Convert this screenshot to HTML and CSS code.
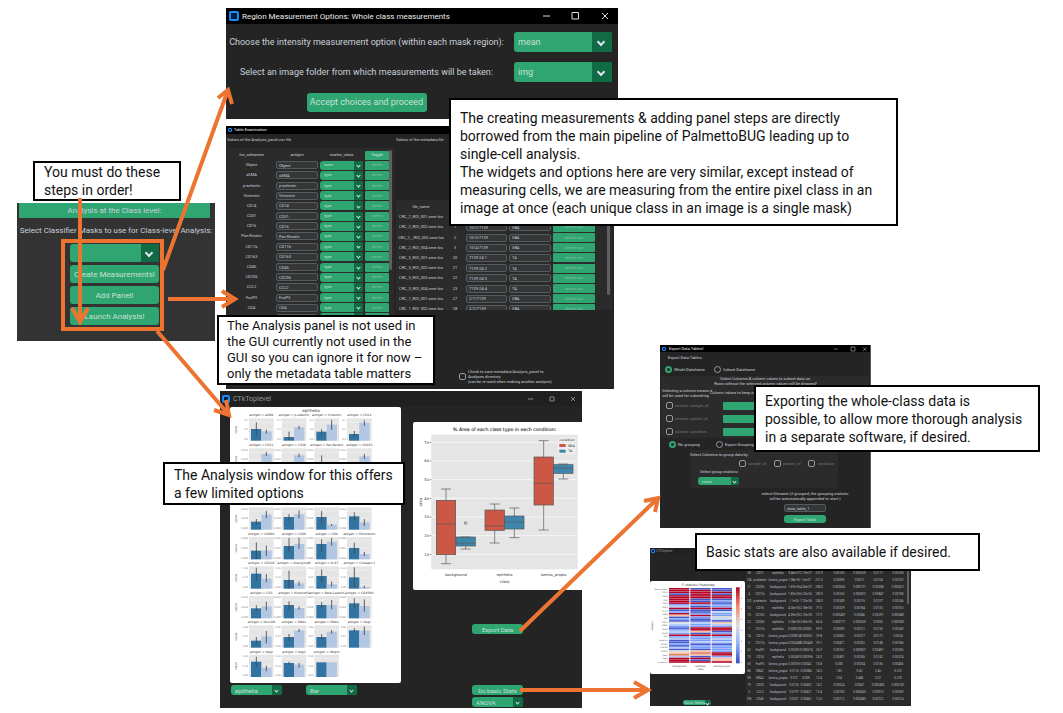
FILE: index.html
```html
<!DOCTYPE html>
<html lang="en">
<head>
<meta charset="utf-8">
<title>Class-level analysis workflow</title>
<link rel="stylesheet" href="styles.css">
</head>
<body>
<main class="board">

  <section class="panel launcher">
    <h2 class="launcher-title">Analysis at the Class level:</h2>
    <label class="launcher-label" for="mask">Select Classifier Masks to use for Class-level Analysis:</label>
    <div class="launcher-actions">
      <span class="combo"><select id="mask"><option></option></select></span>
      <button>Create Measurements!</button>
      <button>Add Panel!</button>
      <button>Launch Analysis!</button>
    </div>
  </section>

  <section class="panel region">
    <header class="titlebar"><i class="logo"></i><span>Region Measurement Options: Whole class measurements</span>
      <svg class="controls" viewBox="0 0 78 12"><path d="M6 6h7M35 2.500h6.500v6.500h-6.500zM65 3l6 6M71 3l-6 6"/></svg></header>
    <div class="region-body">
      <label for="stat">Choose the intensity measurement option (within each mask region):</label>
      <span class="combo"><select id="stat"><option>mean</option></select></span>
      <label for="folder">Select an image folder from which measurements will be taken:</label>
      <span class="combo"><select id="folder"><option>img</option></select></span>
      <button>Accept choices and proceed</button>
    </div>
  </section>

  <section class="panel tables">
    <header class="titlebar"><i class="logo"></i><span>Table Examination</span></header>
    <div class="tables-body">
      <div class="tables-left">
        <p>Values of the Analysis_panel.csv file</p>
        <div class="scroll"><div class="antigens" id="antigens"></div><i class="thumb"></i></div>
      </div>
      <div class="tables-right">
        <p>Values of the metadata file</p>
        <div class="scroll meta-scroll"><div class="metadata" id="metadata"></div><i class="thumb"></i></div>
        <label class="save"><input type="checkbox"><span>Check to save metadata/Analysis_panel to<br>Analyses directory<br>(can be re-used when making another analysis)</span></label>
      </div>
    </div>
  </section>

  <section class="panel analysis">
    <header class="titlebar"><i class="logo"></i><span>CTkToplevel</span>
      <svg class="controls" viewBox="0 0 78 12"><path d="M24 6h5M46 4h4v4h-4zM67 4l4 4M71 4l-4 4"/></svg></header>
    <div class="analysis-body">
      <div class="analysis-left">
        <svg class="figure facets" id="facets" viewBox="45 66 513 828"></svg>
        <div class="combo-row">
          <span class="combo"><select aria-label="Class"><option>epithelia</option></select></span>
          <span class="combo"><select aria-label="Plot type"><option>Bar</option></select></span>
        </div>
      </div>
      <div class="analysis-right">
        <svg class="figure boxes" id="boxes" viewBox="24 112 507 504"></svg>
        <div class="analysis-actions">
          <button>Export Data</button>
          <button class="stats-button">Do basic Stats</button>
          <span class="combo"><select aria-label="Test"><option>ANOVA</option></select></span>
        </div>
      </div>
    </div>
  </section>

  <section class="panel export">
    <header class="titlebar"><i class="logo"></i><span>Export Data Tables!</span>
      <svg class="controls" viewBox="0 0 78 12"><path d="M10 6h7M44 2h8v8h-8zM68 3l7 7M75 3l-7 7"/></svg></header>
    <div class="export-body">
      <p class="export-heading">Export Data Tables:</p>
      <div class="radios"><label><input type="radio" name="frame" checked>Whole Dataframe</label><label><input type="radio" name="frame">Subset Dataframe</label></div>
      <div class="subset">
        <p class="subset-note">Select Columns &amp; column values to subset data on.<br>Rows without the selected column values will be dropped!</p>
        <p>Selecting a column means it<br>will be used for subsetting</p><p class="keep">Column values to keep can</p>
        <label><input type="checkbox">column: sample_id</label><button aria-label="sample_id values"></button>
        <label><input type="checkbox">column: patient_id</label><button aria-label="patient_id values"></button>
        <label><input type="checkbox">column: condition</label><button aria-label="condition values"></button>
      </div>
      <div class="radios grouping"><label><input type="radio" name="group" checked>No grouping</label><label><input type="radio" name="group">Export Grouping</label></div>
      <div class="group">
        <p>Select Columns to group data by:</p>
        <div class="group-checks"><label><input type="checkbox">sample_id</label><label><input type="checkbox">patient_id</label><label><input type="checkbox">condition</label></div>
        <label class="group-stat" for="gstat">Select group statistic:</label>
        <span class="combo"><select id="gstat"><option>mean</option></select></span>
      </div>
      <div class="save-form">
        <label for="fname">select filename (if grouped, the grouping statistic<br>will be automatically appended to start:)</label>
        <input id="fname" value="data_table_1">
        <button>Export Table</button>
      </div>
    </div>
  </section>

  <section class="panel stats">
    <header class="titlebar"><i class="logo"></i><span>CTkToplevel</span></header>
    <div class="stats-body">
      <div class="stats-left">
        <svg class="figure heat" id="heat" viewBox="30 153 285 279"></svg>
        <span class="combo"><select aria-label="Heatmap type"><option>Stat vs. Heatmap</option></select></span>
      </div>
      <div class="stats-right"><table id="stats"></table><i class="thumb"></i></div>
    </div>
  </section>

  <p class="note note-order">You must do these<br>steps in order!</p>
  <p class="note note-borrowed">The creating measurements &amp; adding panel steps are directly<br>borrowed from the main pipeline of PalmettoBUG leading up to<br>single-cell analysis.<br>The widgets and options here are very similar, except instead of<br>measuring cells, we are measuring from the entire pixel class in an<br>image at once (each unique class in an image is a single mask)</p>
  <p class="note note-panel">The Analysis panel is not used in<br>the GUI currently not used in the<br>GUI so you can ignore it for now –<br>only the metadata table matters</p>
  <p class="note note-window">The Analysis window for this offers<br>a few limited options</p>
  <p class="note note-export">Exporting the whole-class data is<br>possible, to allow more thorough analysis<br>in a separate software, if desired.</p>
  <p class="note note-stats">Basic stats are also available if desired.</p>

  <svg class="arrows" width="1063" height="713" viewBox="0 0 1063 713">
    <rect x="63" y="241" width="99" height="88"/>
    <path d="M80 198V321M72 308l8 14 8-14"/>
    <path d="M163 270L228 90M218 98l10-8 4 14"/>
    <path d="M168 299H234M222 291l13 8-13 8"/>
    <path d="M157 331L229 415M214 410l15 5-3-15"/>
    <path d="M520 631L658 498M644 501l14-3-3 14"/>
    <path d="M520 690H647M634 682l14 8-14 8"/>
  </svg>
</main>
<script src="app.js"></script>
</body>
</html>
```
FILE: styles.css
```css
* { box-sizing: border-box; }
body { margin: 0; background: #fff; font-family: Roboto, "Liberation Sans", sans-serif; }
p, h2 { margin: 0; font-weight: 400; }
button, input, select { font: inherit; color: inherit; margin: 0; padding: 0; border: 0; min-width: 0; }
.board { position: relative; min-height: 713px; overflow: hidden; }

/* windows on the board */
.panel { position: absolute; overflow: hidden; background: #242424; color: #c9d0d8; display: flex; flex-direction: column; }
.titlebar { display: flex; align-items: center; flex: none; background: #000; color: #eee; }
.logo { flex: none; width: 10px; height: 10px; border: 2px solid #1a8cf5; border-radius: 2px; background: #001c40; }
.controls { margin-left: auto; width: 78px; height: 12px; fill: none; stroke: #ddd; stroke-width: 1; }
button { background: #2fa572; border-radius: 3px; color: #c9e0d8; white-space: nowrap; overflow: hidden; }
.combo { position: relative; display: flex; min-width: 0; color: #c9e0d8; }
.combo select { appearance: none; width: 100%; background: #2fa572; border-radius: 3px; padding-left: 4px; opacity: 1; }
.combo::before { content: ""; position: absolute; right: 0; top: 0; bottom: 0; width: 20%; background: #106a43; border-radius: 0 3px 3px 0; }
.combo::after { content: ""; position: absolute; right: 8%; top: 35%; width: 3px; height: 3px; border: solid #dce4ee; border-width: 0 1px 1px 0; transform: rotate(45deg); }
.figure { display: block; background: #fff; border-radius: 2px; font-family: "DejaVu Sans", sans-serif; }
.thumb { background: #606060; border-radius: 2px; width: 3px; flex: none; }
input[type="checkbox"], input[type="radio"] { appearance: none; flex: none; width: 7px; height: 7px; border: 1px solid #949a9f; border-radius: 2px; }
input[type="radio"] { border-radius: 50%; }
input[type="radio"]:checked { border: 2px solid #2fa572; }

.launcher { left: 17px; top: 203px; width: 198px; height: 138px; background: #333; font-size: 8px; text-align: center; }
.launcher-title { margin: 0 5px 0 2px; background: #2fa572; font-size: 8px; line-height: 15px; }
.launcher-label { line-height: 26px; white-space: nowrap; }
.launcher-actions { display: grid; grid-auto-rows: 18px; gap: 3px; width: 89px; margin-left: 53px; }
.launcher .combo::after, .region .combo::after { width: 4px; height: 4px; border-width: 0 2px 2px 0; }

.region { left: 226px; top: 8px; width: 392px; height: 111px; font-size: 9px; }
.region .titlebar { height: 16px; padding: 0 3px; gap: 3px; font-size: 8px; }
.region-body { display: grid; grid-template-columns: 1fr 98px; grid-auto-rows: 20px; row-gap: 10px; column-gap: 10px; padding: 8px 6px 0 3px; align-items: center; text-align: center; white-space: nowrap; }
.region-body .combo { height: 20px; }
.region-body button { width: 120px; height: 19px; justify-self: center; }

.tables { left: 226px; top: 126px; width: 388px; height: 263px; font-size: 4px; line-height: 6px; }
.tables .titlebar { height: 8px; padding: 0 2px; gap: 2px; }
.tables .logo, .export .logo, .stats .logo { width: 4px; height: 4px; border-width: 1px; border-radius: 1px; }
.tables-body { display: grid; grid-template-columns: 167px 1fr; padding: 3px 2px 0 1px; }
.tables p { height: 11px; font-size: 4px; white-space: nowrap; }
.tables-right { padding-left: 2px; }
.scroll { display: flex; align-items: flex-start; background: #2b2b2b; padding: 2px; }
.antigens { flex: 1; height: 173px; display: grid; grid-template-columns: 45px 42px 43px 1fr; grid-template-rows: repeat(17, 1fr); gap: 0 2px; align-items: center; text-align: center; overflow: hidden; }
.antigens input, .metadata input { width: 100%; height: 8px; background: #343638; border: 1px solid #565b5e; border-radius: 2px; padding-left: 2px; }
.antigens .combo, .antigens .combo select { height: 9px; }
.antigens button, .metadata button { height: 9px; border-radius: 1px; color: #86bda3; }
.antigens .head { color: #dce4ee; }
.antigens .combo::after, .analysis .combo::after, .export .combo::after, .stats .combo::after { width: 2px; height: 2px; }
.tables-left .thumb { height: 120px; }
.meta-scroll { height: 110px; overflow: hidden; }
.tables-right > p + .meta-scroll { margin-top: 52px; }
.metadata { flex: 1; height: 112px; display: grid; grid-template-columns: 46px 18px 41px 42px 42px; grid-template-rows: repeat(11, 1fr); gap: 0 2px; align-items: center; text-align: center; }
.meta-scroll .thumb { height: 93px; }
.save { display: flex; align-items: center; gap: 2px; margin: 59px 0 0 63px; line-height: 5px; white-space: nowrap; }

.analysis { left: 220px; top: 391px; width: 362px; height: 317px; font-size: 6px; }
.analysis .titlebar { height: 15px; padding-left: 2px; gap: 3px; background: #202020; color: #999; font-size: 7px; }
.analysis .logo { width: 8px; height: 8px; border-width: 2px; }
.analysis .controls { stroke: #888; width: 78px; }
.analysis-body { display: flex; gap: 12px; padding: 1px 0 0 10px; }
.facets { width: 171px; height: 276px; }
.combo-row { display: flex; gap: 24px; margin-top: 2px; padding-left: 1px; }
.combo-row .combo, .analysis-actions .combo { width: 51px; height: 10px; }
.analysis-right { padding-top: 15px; }
.boxes { width: 169px; height: 168px; border-radius: 2px 0 0 2px; }
.analysis-actions { display: flex; flex-direction: column; align-items: flex-start; margin: 34px 0 0 59px; }
.analysis-actions button { width: 51px; height: 10px; }
.analysis-actions .stats-button { margin: 51px 0 2px; }

.export { left: 660px; top: 345px; width: 211px; height: 183px; font-size: 4px; line-height: 5px; border-right: 1px solid #555; white-space: nowrap; }
.export .titlebar { height: 7px; padding: 0 2px; gap: 3px; }
.export .controls { width: 39px; height: 6px; margin-right: 0; }
.export-heading { padding: 3px 8px; }
.radios { display: flex; gap: 10px; height: 13px; padding-left: 5px; }
.radios label, .subset label, .group-checks label { display: flex; align-items: center; gap: 2px; }
.radios label { width: 39px; }
.subset { display: grid; grid-template-columns: 47px 1fr; grid-template-rows: 10px 13px repeat(3, 13px); background: #2b2b2b; margin: 0 1px; column-gap: 14px; padding-left: 1px; align-items: center; }
.subset p { text-align: center; }
.subset .keep { margin-left: -13px; text-align: left; }
.subset-note { grid-column: 1 / 3; }
.subset label, .group-checks label { color: #777; padding-left: 4px; }
.subset button { height: 8px; width: 60px; border-radius: 1px; }
.radios.grouping { height: 12px; padding-left: 9px; gap: 8px; }
.group { background: #2b2b2b; margin: 0 32px 0 30px; height: 38px; }
.group p { padding: 2px 0 3px; }
.group-checks { display: flex; justify-content: flex-end; gap: 4px; padding-right: 4px; }
.group-stat { display: block; padding: 2px 10px 3px; }
.group .combo { width: 41px; height: 8px; margin-left: 8px; }
.save-form { display: flex; flex-direction: column; align-items: center; gap: 3px; margin: 3px 20px 0 100px; text-align: center; }
.save-form input, .save-form button { width: 42px; height: 8px; }
.save-form input { background: #343638; border: 1px solid #565b5e; border-radius: 2px; padding-left: 2px; }

.stats { left: 650px; top: 548px; width: 261px; height: 158px; font-size: 3px; }
.stats .titlebar { height: 5px; padding-left: 1px; gap: 1px; background: #202020; color: #999; }
.stats-body { display: flex; }
.stats-left { padding-top: 28px; }
.heat { width: 95px; height: 93px; }
.stats-left .combo { width: 28px; height: 5px; margin: 26px 0 0 33px; }
.stats-left select { padding-left: 1px; }
.stats-right { flex: 1; display: flex; align-items: flex-start; background: #2b2b2b; margin: 16px 1px 0; padding-top: 1px; overflow: hidden; }
.stats-right .thumb { width: 2px; height: 34px; }
.stats table { width: 161px; border-collapse: collapse; table-layout: fixed; text-align: center; line-height: 7px; color: #b8bec5; }
.stats td { padding: 0; white-space: nowrap; }
.c-id { width: 6px; }
.c-name { width: 16px; }
.c-class { width: 20px; }
.c-num { width: 12px; }
.c-f { width: 14px; }
.c-p { width: 26px; }
.c-sd { width: 15px; }
.c-mean { width: 22px; }
.c-last { width: 18px; }

/* callouts */
.note { position: absolute; background: #fff; border: 2px solid #000; color: #111; font-size: 14px; line-height: 18px; white-space: nowrap; }
.note-order { left: 33px; top: 161px; width: 148px; padding: 0 9px; }
.note-borrowed { left: 449px; top: 98px; width: 449px; padding: 9px 9px 7px; }
.note-panel { left: 217px; top: 315px; width: 218px; padding: 1px 8px; font-size: 13px; line-height: 16px; }
.note-window { left: 163px; top: 462px; width: 242px; padding: 2px 9px 1px; }
.note-export { left: 754px; top: 385px; width: 286px; padding: 5px 9px 4px; }
.note-stats { left: 695px; top: 533px; width: 285px; padding: 8px 9px; }

.arrows { position: absolute; left: 0; top: 0; fill: none; stroke: #ed7331; stroke-width: 4; pointer-events: none; }
```
FILE: app.js
```js
const byId = id => document.getElementById(id);

/* antigen panel */
const antigens = ['Object', 'aSMA', 'p-selectin', 'Vimentin', 'CD14', 'CD31', 'CD16', 'Pan-Keratin', 'CD11b', 'CD163', 'CD45', 'CD206', 'CCL2', 'FoxP3', 'CD4', ''];
byId('antigens').innerHTML =
  '<span>fcs_colnames</span><span>antigen</span><span>marker_class</span><button class="head">Toggle</button>' +
  antigens.map((a, i) => `<span>${a}</span><input aria-label="antigen ${a}" value="${a}"><span class="combo"><select aria-label="marker class ${a}"><option>${i ? (a ? 'type' : '') : 'none'}</option></select></span><button>${a ? 'delete' : ''}</button>`).join('');

/* metadata */
const files = [['2_ROI_001', 0, '', ''], ['2_ROI_002', 1, '10/2/7139', 'SBA'], ['2__ROI_003', 2, '10/3/7139', 'SBA'], ['2_ROI_004', 3, '10/4/7139', 'SBA'],
  ['3_ROI_001', 20, '7139-24-1', 'TA'], ['3_ROI_002', 21, '7139-24-2', 'TA'], ['3_ROI_003', 22, '7139-24-3', 'TA'], ['3_ROI_004', 23, '7139-24-4', 'TA'],
  ['1_ROI_001', 27, '2/1/7139', 'SBA'], ['1_ROI_002', 28, '2/2/7139', 'SBA']];
byId('metadata').innerHTML = '<span>file_name</span><span>s</span><span></span><span></span><span></span>' +
  files.map(f => `<span>CRC_${f[0]}.ome.fcs</span><span>${f[1] || ''}</span><input aria-label="patient" value="${f[2]}"><input aria-label="condition" value="${f[3]}"><button>${f[2] ? 'delete row' : ''}</button>`).join('');

const text = (x, y, s, size, extra = '') => `<text x="${x}" y="${y}" font-size="${size}" text-anchor="middle" fill="#333" ${extra}>${s}</text>`;
const rect = (x, y, w, h, fill, extra = '') => `<rect x="${x}" y="${y}" width="${w}" height="${h}" fill="${fill}" ${extra}/>`;

/* facet bars: [name, bar1 top, low, high, bar2 top, low, high], offsets down from the facet top */
const facetRows = [
  [100, ['0.4', '0.2', '0.0'], ['aSMA', 32, 12, 50, 39, 34, 46], ['p-selectin', 56, 40, 65, 27, 23, 33], ['Vimentin', 40, 32, 50, 19, 5, 35], ['CD14', 47, 38, 55, 13, 6, 23]],
  [190, ['0.015', '0.010'], ['CD31', 50, 42, 60, 17, 11, 23], ['CD16', 50, 42, 60, 21, 16, 27], ['Pan-Keratin', 48, 21, 60, 50, 45, 60], ['CD163', 50, 44, 60, 24, 17, 32]],
  [367, ['0.015', '0.010', '0.000'], ['', 43, 35, 53, 22, 11, 33], ['', 29, 20, 41, 21, 9, 33], ['', 29, 11, 48, 52, 50, 56], ['', 27, 15, 39, 45, 35, 56]],
  [456, ['0.006', '0.004', '0.000'], ['CD66b', 41, 16, 66, 41, 26, 57], ['CD20', 27, 3, 44, 21, 2, 35], ['CD8', 21, 7, 42, 14, 3, 26], ['Fibronectin', 33, 17, 49, 51, 45, 57]],
  [544, ['0.15', '0.10', '0.00'], ['CD326', 22, 4, 44, 37, 23, 48], ['GranzymeB', 41, 13, 66, 51, 45, 59], ['Ki-67', 29, 9, 47, 54, 46, 61], ['Collagen-1', 33, 3, 63, 62, 58, 65]],
  [633, ['0.020', '0.010', '0.000'], ['CD3', 37, 28, 45, 31, 17, 43], ['HistoneH3', 27, 16, 41, 36, 31, 41], ['Beta-Catenin', 27, 18, 36, 27, 12, 40], ['CD45RO', 22, 7, 38, 30, 10, 47]],
  [721, ['0.06', '0.04', '0.00'], ['HLA-DR', 46, 35, 58, 33, 17, 54], ['DNA1', 35, 26, 46, 15, 11, 20], ['DNA2', 35, 27, 45, 19, 14, 25], ['Seg1', 15, 9, 21, 16, 4, 29]],
  [809, ['0.20', '0.10', '0.00'], ['Seg2', 21, 6, 36, 39, 33, 50], ['Seg3', 25, 21, 29, 30, 25, 39], ['Object', 23, 23, 23, 23, 23, 23]]];
let facets = text(288, 82, 'epithelia', 12);
facetRows.forEach(([y, ticks, ...cells]) => {
  facets += text(0, 0, 'value', 9, `transform="translate(66 ${y + 34}) rotate(-90)"`);
  cells.forEach((c, i) => {
    const x = [102, 200, 298, 396][i];
    facets += rect(x, y, 74, 67, '#e5e5e5');
    [12, 34, 56].forEach(d => { facets += `<path d="M${x} ${y + d}h74" stroke="#fff"/>`; });
    facets += rect(x + 6, y + c[1], 31, 67 - c[1], '#3274a1') + rect(x + 37, y + c[4], 31, 67 - c[4], '#b3c7e3');
    facets += `<path d="M${x + 22} ${y + c[2]}V${y + c[3]}M${x + 52} ${y + c[5]}V${y + c[6]}" stroke="#444" stroke-width="2.500"/>`;
    if (c[0]) facets += text(x + 37, y - 6, 'antigen = ' + c[0], 9);
    ticks.forEach((t, k) => { facets += `<text x="${x - 3}" y="${y + 7 + k * 29}" font-size="7" text-anchor="end" fill="#777">${t}</text>`; });
  });
});
byId('facets').innerHTML = facets;

/* box plot: [x, upper whisker, box top, median, box bottom, lower whisker, colour] */
let boxes = text(299, 140, '% Area of each class type in each condition:', 14, 'stroke="#333" stroke-width="0.4"') + rect(79, 150, 439, 404, '#e5e5e5');
[70, 60, 50, 40, 30, 20, 10].forEach((v, i) => {
  const y = 173 + i * 56;
  boxes += `<path d="M79 ${y}H518" stroke="#fff" stroke-width="2"/>` + text(65, y + 4, v, 11) + `<path d="M74 ${y}h5" stroke="#555" stroke-width="2"/>`;
});
[[94, 313, 347, 418, 510, 537, 'r'], [153, 457, 457, 475, 484, 493, 'b'], [240, 358, 376, 424, 437, 475, 'r'], [299, 370, 394, 412, 433, 459, 'b'], [387, 168, 217, 296, 361, 436, 'r'], [446, 238, 240, 250, 266, 283, 'b']]
  .forEach(([x, hi, top, med, bot, lo, c]) => {
    boxes += rect(x, top, 58, bot - top, c === 'r' ? '#cb5744' : '#3f86ad', 'stroke="#555" stroke-width="2"') +
      `<path d="M${x} ${med}h58M${x + 29} ${hi}V${top}M${x + 29} ${bot}V${lo}M${x + 14} ${hi}h30M${x + 14} ${lo}h30" stroke="#555" stroke-width="2"/>`;
  });
boxes += '<circle cx="182" cy="415" r="4" fill="none" stroke="#555" stroke-width="2"/>';
[['background', 153], ['epithelia', 299], ['lamina_propia', 445]].forEach(([s, x]) => { boxes += text(x, 575, s, 11); });
boxes += text(299, 594, 'class', 12) + text(0, 0, 'area', 12, 'transform="translate(50 352) rotate(-90)"') +
  rect(457, 156, 56, 55, '#ededed', 'stroke="#ddd"') + text(486, 168, 'condition', 10) +
  rect(463, 178, 19, 9, '#cb5744') + text(499, 187, 'SBA', 10) + rect(463, 195, 19, 9, '#3f86ad') + text(496, 203, 'TA', 10);
byId('boxes').innerHTML = boxes;

/* heatmap */
const shade = { R: '#b40426', r: '#e0745e', p: '#f4bfa4', w: '#dddcdc', l: '#b5cdfa', b: '#7b9ff9', B: '#4358cb' };
const heatRows = 'RBB RRB RRR BRB RRR RRR RBB RBb RRB bbb lBb RRR BBB bBl Rbb pRb Bbw bBl BBB wlp lbl bbb BRR bRR lpB bBb RRR bbb lbl Bbb Bll bBB Bbb lbb BBb wpb prR rpR lBb RRp RBp RRR'.split(' ');
let heat = text(175, 167, 'F-statistic Heatmap', 10);
const step = 225 / heatRows.length;
heatRows.forEach((row, r) => [...row].forEach((c, i) => { heat += rect(87 + i * 64, 174 + r * step, 61, step - 0.6, shade[c]); }));
['Beta-Catenin', 'CD16', 'CD45', 'CD8', 'CCL2', 'CD20', 'Ki-67', 'aSMA', 'CD4', 'CD31', 'DNA1', 'CD14', 'FoxP3', 'CD3', 'Vimentin', 'CD163', 'HLA-DR', 'CD206', 'Seg1', 'Seg2', 'p-selectin']
  .forEach((s, i) => { heat += `<text x="83" y="${179 + i * 11}" font-size="6" text-anchor="end" fill="#555">${s}</text>`; });
[['background', 118], ['epithelia', 181], ['lamina_propia', 245]].forEach(([s, x]) => { heat += text(x, 411, s, 7); });
heat += text(181, 421, 'class', 7) + text(0, 0, 'antigen', 7, 'transform="translate(38 288) rotate(-90)"') +
  '<defs><linearGradient id="cool" x2="0" y2="1"><stop stop-color="#b40426"/><stop offset=".25" stop-color="#f08a6c"/><stop offset=".5" stop-color="#dddcdc"/><stop offset=".75" stop-color="#8db0fe"/><stop offset="1" stop-color="#3b4cc0"/></linearGradient></defs>' +
  rect(288, 172, 11, 228, 'url(#cool)');
[7, 6, 5, 4, 3, 2, 1, 0].forEach((n, i) => { heat += text(304, 175 + i * 32, n, 6); });
byId('heat').innerHTML = heat;

/* statistics */
const stats = `28 CD31 epithelia 9.46e-07 2.19e-07 237.0 0.00169 0.000639 0.0117 0.00108
104 p-selectin lamina_propia 1.08e-06 1.6e-07 221.0 0.00695 0.0012 0.0104 0.00103
21 CD206 background 1.87e-06 4.06e-07 208.0 0.000652 0.000191 0.00308 0.000417
4 CD11b background 1.87e-05 6.23e-06 109.0 0.00165 0.000872 0.00847 0.00108
102 p-selectin background 1.1e-06 7.32e-06 104.0 0.00349 0.00216 0.0107 0.00146
13 CD16 epithelia 4.36e-05 2.18e-05 77.5 0.00329 0.00184 0.0133 0.00163
10 CD163 background 4.59e-05 2.75e-05 72.9 0.000407 0.00046 0.00297 0.000487
22 CD206 epithelia 5.74e-05 3.83e-05 66.4 0.000771 0.000639 0.0055 0.000587
1 CD11b epithelia 0.000076 0.00005 59.9 0.00099 0.00212 0.0136 0.00249
14 CD16 lamina_propia 0.000814 0.000061 39.8 0.00602 0.00217 0.0172 0.0034
5 CD11b lamina_propia 0.000448 0.000449 29.1 0.00471 0.00202 0.0148 0.00186
63 FoxP3 background 0.00205 0.000674 26.9 0.00161 0.000827 0.00497 0.00206
10 CD14 epithelia 0.00249 0.000996 24.3 0.00491 0.00306 0.0142 0.00224
65 FoxP3 lamina_propia 0.00518 0.00342 16.8 0.005 0.00204 0.0136 0.00406
86 DNA1 lamina_propia 0.0116 0.00084 14.3 1.83 0.42 2.46 0.223
59 DNA2 lamina_propia 0.012 0.009 13.4 2.04 0.446 3.02 0.229
19 CD20 background 0.0135 0.00402 14.2 0.00624 0.0041 0.000405 0.000747
3 CCL2 background 0.0197 0.00427 13.4 0.00105 0.000403 0.00913 0.00259
105 CD45 background 0.0201 0.00462 12.6 0.00112 0.000483 0.00722 0.00214`;
const cols = ['c-id', 'c-name', 'c-class', 'c-num', 'c-num', 'c-f', 'c-p', 'c-sd', 'c-mean', 'c-last'];
byId('stats').innerHTML = '<colgroup>' + cols.map(c => `<col class="${c}">`).join('') + '</colgroup>' +
  '<tbody>' + stats.split('\n').map(r => '<tr>' + r.split(' ').map(v => `<td>${v}</td>`).join('') + '</tr>').join('') + '</tbody>';
```
